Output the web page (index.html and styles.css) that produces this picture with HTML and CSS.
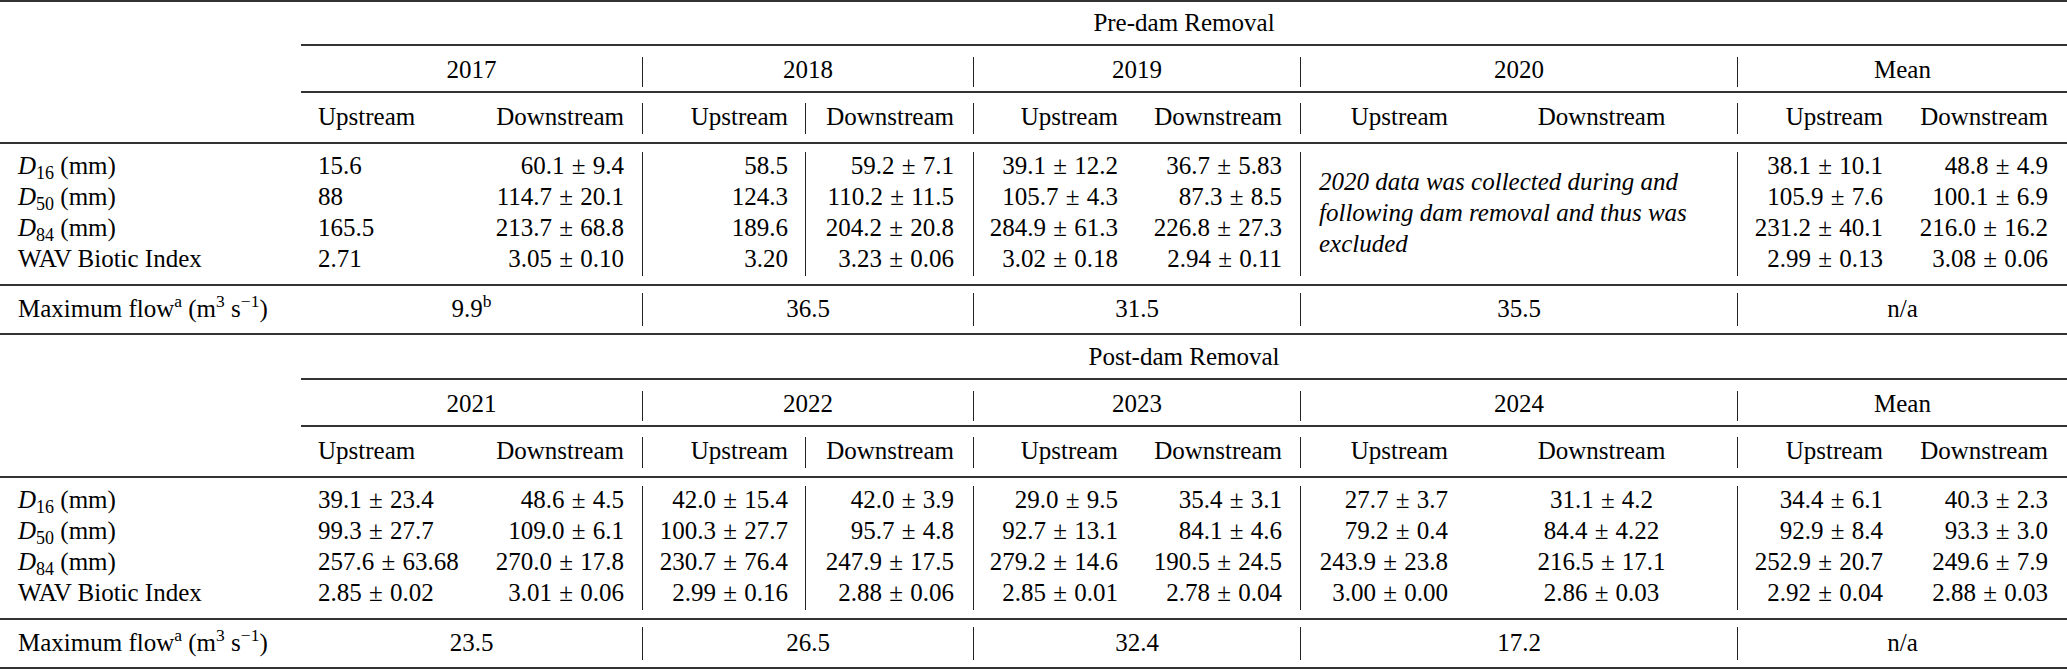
FILE: index.html
```html
<!DOCTYPE html>
<html lang="en">
<head>
<meta charset="utf-8">
<title>Pre- and post-dam removal sediment and biotic data</title>
<link rel="stylesheet" href="styles.css">
</head>
<body>
<table class="tbl">
  <colgroup>
    <col class="w-lbl"><col class="w-c1"><col class="w-c2"><col class="w-c3"><col class="w-c4"><col class="w-c5"><col class="w-c6"><col class="w-c7"><col class="w-c8"><col class="w-c9"><col class="w-c10">
  </colgroup>
  <tbody>
    <tr class="rule r-top"><td colspan="11" class="ln"></td></tr>
    <tr class="row-grp"><td></td><td colspan="10">Pre-dam Removal</td></tr>
    <tr class="rule r-cm1"><td></td><td colspan="10" class="ln"></td></tr>
    <tr class="row-yr"><td></td><td colspan="2">2017</td><td colspan="2" class="sep">2018</td><td colspan="2" class="sep">2019</td><td colspan="2" class="sep">2020</td><td colspan="2" class="sep">Mean</td></tr>
    <tr class="rule r-cm2"><td></td><td colspan="10" class="ln"></td></tr>
    <tr class="row-hd"><td class="lbl"></td><td class="k1">Upstream</td><td class="k2">Downstream</td><td class="k3 sep">Upstream</td><td class="k4 sep">Downstream</td><td class="k5 sep">Upstream</td><td class="k6">Downstream</td><td class="k7 sep">Upstream</td><td class="k8">Downstream</td><td class="k9 sep">Upstream</td><td class="k10">Downstream</td></tr>
    <tr class="rule r-mid1"><td colspan="11" class="ln"></td></tr>
    <tr class="row-d"><td class="lbl"><i>D</i><span class="sb">16</span> (mm)</td><td class="k1">15.6</td><td class="k2">60.1<span class="pm">±</span>9.4</td><td class="k3 sep">58.5</td><td class="k4 sep">59.2<span class="pm">±</span>7.1</td><td class="k5 sep">39.1<span class="pm">±</span>12.2</td><td class="k6">36.7<span class="pm">±</span>5.83</td><td class="note sep" colspan="2" rowspan="4"><i>2020 data was collected during and<br>following dam removal and thus was<br>excluded</i></td><td class="k9 sep">38.1<span class="pm">±</span>10.1</td><td class="k10">48.8<span class="pm">±</span>4.9</td></tr>
    <tr class="row-d"><td class="lbl"><i>D</i><span class="sb">50</span> (mm)</td><td class="k1">88</td><td class="k2">114.7<span class="pm">±</span>20.1</td><td class="k3 sep">124.3</td><td class="k4 sep">110.2<span class="pm">±</span>11.5</td><td class="k5 sep">105.7<span class="pm">±</span>4.3</td><td class="k6">87.3<span class="pm">±</span>8.5</td><td class="k9 sep">105.9<span class="pm">±</span>7.6</td><td class="k10">100.1<span class="pm">±</span>6.9</td></tr>
    <tr class="row-d"><td class="lbl"><i>D</i><span class="sb">84</span> (mm)</td><td class="k1">165.5</td><td class="k2">213.7<span class="pm">±</span>68.8</td><td class="k3 sep">189.6</td><td class="k4 sep">204.2<span class="pm">±</span>20.8</td><td class="k5 sep">284.9<span class="pm">±</span>61.3</td><td class="k6">226.8<span class="pm">±</span>27.3</td><td class="k9 sep">231.2<span class="pm">±</span>40.1</td><td class="k10">216.0<span class="pm">±</span>16.2</td></tr>
    <tr class="row-d"><td class="lbl">WAV Biotic Index</td><td class="k1">2.71</td><td class="k2">3.05<span class="pm">±</span>0.10</td><td class="k3 sep">3.20</td><td class="k4 sep">3.23<span class="pm">±</span>0.06</td><td class="k5 sep">3.02<span class="pm">±</span>0.18</td><td class="k6">2.94<span class="pm">±</span>0.11</td><td class="k9 sep">2.99<span class="pm">±</span>0.13</td><td class="k10">3.08<span class="pm">±</span>0.06</td></tr>
    <tr class="rule r-mid2"><td colspan="11" class="ln"></td></tr>
    <tr class="row-mf"><td class="lbl">Maximum flow<span class="sp">a</span> (m<span class="sp">3</span> s<span class="sp">−1</span>)</td><td colspan="2">9.9<span class="sp">b</span></td><td colspan="2" class="sep">36.5</td><td colspan="2" class="sep">31.5</td><td colspan="2" class="sep">35.5</td><td colspan="2" class="sep">n/a</td></tr>
    <tr class="rule r-blk"><td colspan="11" class="ln"></td></tr>

    <tr class="row-grp"><td></td><td colspan="10">Post-dam Removal</td></tr>
    <tr class="rule r-cm1"><td></td><td colspan="10" class="ln"></td></tr>
    <tr class="row-yr"><td></td><td colspan="2">2021</td><td colspan="2" class="sep">2022</td><td colspan="2" class="sep">2023</td><td colspan="2" class="sep">2024</td><td colspan="2" class="sep">Mean</td></tr>
    <tr class="rule r-cm2"><td></td><td colspan="10" class="ln"></td></tr>
    <tr class="row-hd"><td class="lbl"></td><td class="k1">Upstream</td><td class="k2">Downstream</td><td class="k3 sep">Upstream</td><td class="k4 sep">Downstream</td><td class="k5 sep">Upstream</td><td class="k6">Downstream</td><td class="k7 sep">Upstream</td><td class="k8">Downstream</td><td class="k9 sep">Upstream</td><td class="k10">Downstream</td></tr>
    <tr class="rule r-mid1"><td colspan="11" class="ln"></td></tr>
    <tr class="row-d"><td class="lbl"><i>D</i><span class="sb">16</span> (mm)</td><td class="k1">39.1<span class="pm">±</span>23.4</td><td class="k2">48.6<span class="pm">±</span>4.5</td><td class="k3 sep">42.0<span class="pm">±</span>15.4</td><td class="k4 sep">42.0<span class="pm">±</span>3.9</td><td class="k5 sep">29.0<span class="pm">±</span>9.5</td><td class="k6">35.4<span class="pm">±</span>3.1</td><td class="k7 sep">27.7<span class="pm">±</span>3.7</td><td class="k8">31.1<span class="pm">±</span>4.2</td><td class="k9 sep">34.4<span class="pm">±</span>6.1</td><td class="k10">40.3<span class="pm">±</span>2.3</td></tr>
    <tr class="row-d"><td class="lbl"><i>D</i><span class="sb">50</span> (mm)</td><td class="k1">99.3<span class="pm">±</span>27.7</td><td class="k2">109.0<span class="pm">±</span>6.1</td><td class="k3 sep">100.3<span class="pm">±</span>27.7</td><td class="k4 sep">95.7<span class="pm">±</span>4.8</td><td class="k5 sep">92.7<span class="pm">±</span>13.1</td><td class="k6">84.1<span class="pm">±</span>4.6</td><td class="k7 sep">79.2<span class="pm">±</span>0.4</td><td class="k8">84.4<span class="pm">±</span>4.22</td><td class="k9 sep">92.9<span class="pm">±</span>8.4</td><td class="k10">93.3<span class="pm">±</span>3.0</td></tr>
    <tr class="row-d"><td class="lbl"><i>D</i><span class="sb">84</span> (mm)</td><td class="k1">257.6<span class="pm">±</span>63.68</td><td class="k2">270.0<span class="pm">±</span>17.8</td><td class="k3 sep">230.7<span class="pm">±</span>76.4</td><td class="k4 sep">247.9<span class="pm">±</span>17.5</td><td class="k5 sep">279.2<span class="pm">±</span>14.6</td><td class="k6">190.5<span class="pm">±</span>24.5</td><td class="k7 sep">243.9<span class="pm">±</span>23.8</td><td class="k8">216.5<span class="pm">±</span>17.1</td><td class="k9 sep">252.9<span class="pm">±</span>20.7</td><td class="k10">249.6<span class="pm">±</span>7.9</td></tr>
    <tr class="row-d"><td class="lbl">WAV Biotic Index</td><td class="k1">2.85<span class="pm">±</span>0.02</td><td class="k2">3.01<span class="pm">±</span>0.06</td><td class="k3 sep">2.99<span class="pm">±</span>0.16</td><td class="k4 sep">2.88<span class="pm">±</span>0.06</td><td class="k5 sep">2.85<span class="pm">±</span>0.01</td><td class="k6">2.78<span class="pm">±</span>0.04</td><td class="k7 sep">3.00<span class="pm">±</span>0.00</td><td class="k8">2.86<span class="pm">±</span>0.03</td><td class="k9 sep">2.92<span class="pm">±</span>0.04</td><td class="k10">2.88<span class="pm">±</span>0.03</td></tr>
    <tr class="rule r-mid2"><td colspan="11" class="ln"></td></tr>
    <tr class="row-mf"><td class="lbl">Maximum flow<span class="sp">a</span> (m<span class="sp">3</span> s<span class="sp">−1</span>)</td><td colspan="2">23.5</td><td colspan="2" class="sep">26.5</td><td colspan="2" class="sep">32.4</td><td colspan="2" class="sep">17.2</td><td colspan="2" class="sep">n/a</td></tr>
    <tr class="rule r-bot"><td colspan="11" class="ln"></td></tr>
  </tbody>
</table>
</body>
</html>
```

FILE: styles.css
```css
html, body {
  margin: 0;
  padding: 0;
  background: #ffffff;
}

body {
  font-family: "Liberation Serif", "Times New Roman", serif;
  font-size: 25px;
  color: #000000;
}

.tbl {
  width: 2067px;
  table-layout: fixed;
  border-collapse: separate;
  border-spacing: 0;
}

.tbl td {
  padding: 0;
  white-space: nowrap;
  vertical-align: top;
  text-align: center;
}

.w-lbl { width: 301px; }
.w-c1 { width: 176px; }
.w-c2 { width: 165px; }
.w-c3 { width: 163px; }
.w-c4 { width: 168px; }
.w-c5 { width: 163px; }
.w-c6 { width: 164px; }
.w-c7 { width: 166px; }
.w-c8 { width: 271px; }
.w-c9 { width: 166px; }
.w-c10 { width: 164px; }

/* rules (booktabs style) */
.rule td {
  font-size: 0;
  line-height: 0;
}
.rule .ln {
  background-image: linear-gradient(#333333, #333333);
  background-repeat: no-repeat;
  background-size: 100% 2px;
}
.r-top td { height: 7px; }
.r-top .ln { background-position: 0 0; }
.r-cm1 td { height: 19px; }
.r-cm1 .ln { background-position: 0 6px; }
.r-cm2 td { height: 16px; }
.r-cm2 .ln { background-position: 0 4px; }
.r-mid1 td { height: 18px; }
.r-mid1 .ln { background-position: 0 8px; }
.r-mid2 td { height: 17px; }
.r-mid2 .ln { background-position: 0 8px; }
.r-blk td { height: 15px; }
.r-blk .ln { background-position: 0 7px; }
.r-bot td { height: 9px; }
.r-bot .ln { background-position: 0 7px; }

/* content rows */
.row-grp td {
  height: 31px;
  line-height: 31px;
}
.row-yr td {
  height: 26px;
  line-height: 26px;
  padding-bottom: 4px;
}
.row-hd td,
.row-d td {
  height: 28px;
  line-height: 28px;
  padding-bottom: 3px;
}
.row-mf td {
  height: 31px;
  line-height: 31px;
  padding-bottom: 2px;
}

.sep {
  border-left: 1px solid #222222;
}

/* column alignment */
.tbl .lbl { text-align: left; padding-left: 18px; }
.tbl .k1 { text-align: left; padding-left: 17px; }
.tbl .k2 { text-align: right; padding-right: 18px; }
.tbl .k3 { text-align: right; padding-right: 17px; }
.tbl .k4 { text-align: right; padding-right: 19px; }
.tbl .k5 { text-align: right; padding-right: 18px; }
.tbl .k6 { text-align: right; padding-right: 18px; }
.tbl .k7 { text-align: right; padding-right: 18px; }
.tbl .k8 { text-align: center; }
.tbl .k9 { text-align: right; padding-right: 20px; }
.tbl .k10 { text-align: right; padding-right: 19px; }

.tbl .note {
  text-align: left;
  white-space: nowrap;
  padding-left: 18px;
  padding-top: 14px;
  line-height: 31px;
  vertical-align: top;
}

.pm {
  margin: 0 0.29em;
}

.sb {
  font-size: 0.72em;
  vertical-align: -5px;
  line-height: 0;
}

.sp {
  font-size: 0.7em;
  vertical-align: 10px;
  line-height: 0;
}
```
